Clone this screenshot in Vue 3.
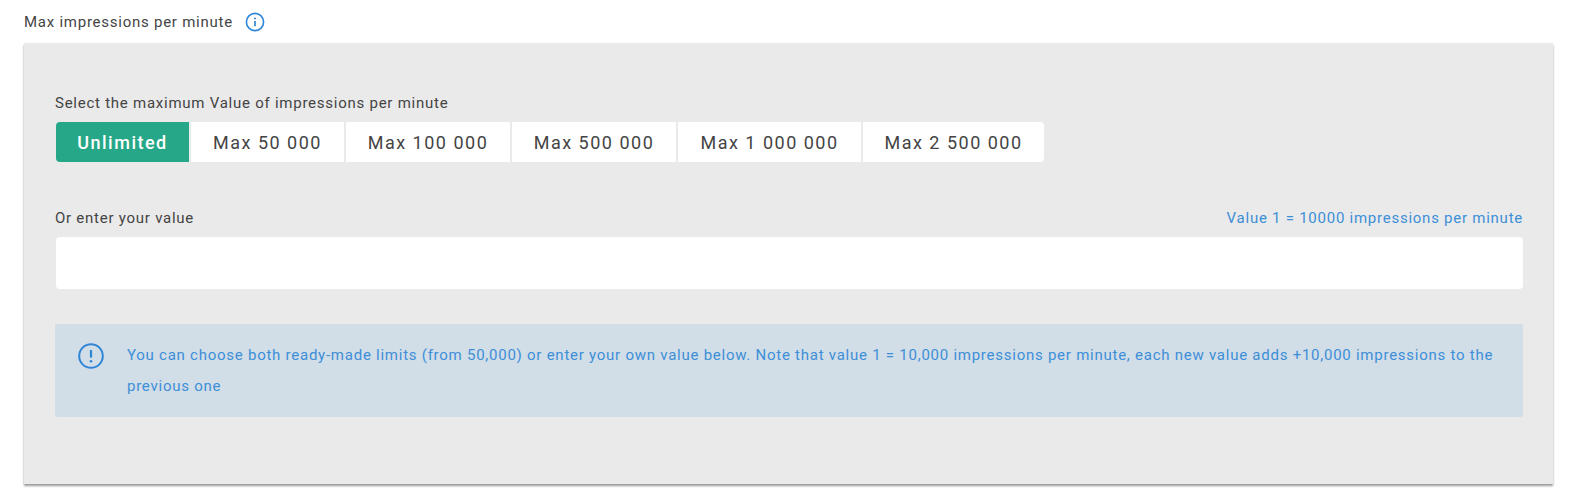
<template>
  <div class="page">
    <div class="title">
      <span>Max impressions per minute</span>
      <svg class="info-icon" viewBox="0 0 20 20" width="20" height="20">
        <circle cx="10" cy="10" r="8.6" fill="none" stroke="#2f86d6" stroke-width="1.6" />
        <circle cx="10" cy="6.4" r="1" fill="#2f86d6" />
        <path d="M10 9v5.2" stroke="#2f86d6" stroke-width="1.7" fill="none" />
      </svg>
    </div>

    <div class="panel">
      <div class="select-label">Select the maximum Value of impressions per minute</div>
      <div class="limits">
        <button
          v-for="(limit, i) in limits"
          :key="limit.text"
          class="limit"
          :class="{ active: i === 0 }"
          :style="{ width: limit.width + 'px' }"
        >
          {{ limit.text }}
        </button>
      </div>

      <div class="value-head">
        <span>Or enter your value</span>
        <span class="value-hint">Value 1 = 10000 impressions per minute</span>
      </div>
      <input class="value-input" type="text" />

      <div class="alert">
        <svg class="alert-icon" viewBox="0 0 26 26" width="26" height="26">
          <circle cx="13" cy="13" r="11.8" fill="none" stroke="#2f86d6" stroke-width="2" />
          <path d="M13 7v7.6" stroke="#2f86d6" stroke-width="2.2" fill="none" />
          <circle cx="13" cy="18.2" r="1.3" fill="#2f86d6" />
        </svg>
        <p>
          You can choose both ready-made limits (from 50,000) or enter your own value below. Note that value 1 = 10,000 impressions per minute, each new value adds +10,000 impressions to the previous one
        </p>
      </div>
    </div>
  </div>
</template>

<script setup>
const limits = [
  { text: "Unlimited", width: 133 },
  { text: "Max 50 000", width: 153 },
  { text: "Max 100 000", width: 164 },
  { text: "Max 500 000", width: 164 },
  { text: "Max 1 000 000", width: 183 },
  { text: "Max 2 500 000", width: 181 },
];
</script>

<style>
html,
body {
  background: #fff;
}
</style>

<style scoped>
.page {
  box-sizing: border-box;
  height: 502px;
  padding: 12px 28px 0 24px;
  font-family: Roboto, "Liberation Sans", sans-serif;
  font-size: 15px;
  color: #444;
  letter-spacing: 0.75px;
}

.title {
  display: flex;
  align-items: center;
  gap: 12px;
  height: 20px;
  margin-bottom: 11px;
}

.info-icon {
  display: block;
}

.panel {
  height: 441px;
  box-sizing: border-box;
  padding: 51px 30px 0 31px;
  background: #eaeaea;
  box-shadow: 0 2px 2px rgba(0, 0, 0, 0.4);
}

.select-label {
  line-height: 18px;
  margin-bottom: 10px;
}

.limits {
  display: flex;
  gap: 2px;
  margin-left: 1px;
}

.limit {
  height: 40px;
  padding: 0;
  border: none;
  background: #fff;
  color: #444;
  font-family: inherit;
  font-size: 18px;
  letter-spacing: 1.5px;
}

.limit:first-child {
  border-radius: 4px 0 0 4px;
}

.limit:last-child {
  border-radius: 0 4px 4px 0;
}

.limit.active {
  background: #26a888;
  color: #fff;
  font-weight: 500;
}

.value-head {
  display: flex;
  justify-content: space-between;
  line-height: 18px;
  margin-top: 47px;
  margin-bottom: 10px;
}

.value-hint {
  color: #3d8fd8;
}

.value-input {
  display: block;
  box-sizing: border-box;
  width: calc(100% - 1px);
  height: 52px;
  margin-left: 1px;
  border: none;
  border-radius: 4px;
  background: #fff;
}

.alert {
  display: flex;
  gap: 23px;
  box-sizing: border-box;
  height: 93px;
  margin-top: 35px;
  padding: 19px 24px 0 23px;
  border-radius: 2px;
  background: #d1dde7;
  color: #3d8fd8;
}

.alert-icon {
  flex: none;
}

.alert p {
  margin: 0;
  line-height: 31px;
  margin-top: -3px;
}
</style>
